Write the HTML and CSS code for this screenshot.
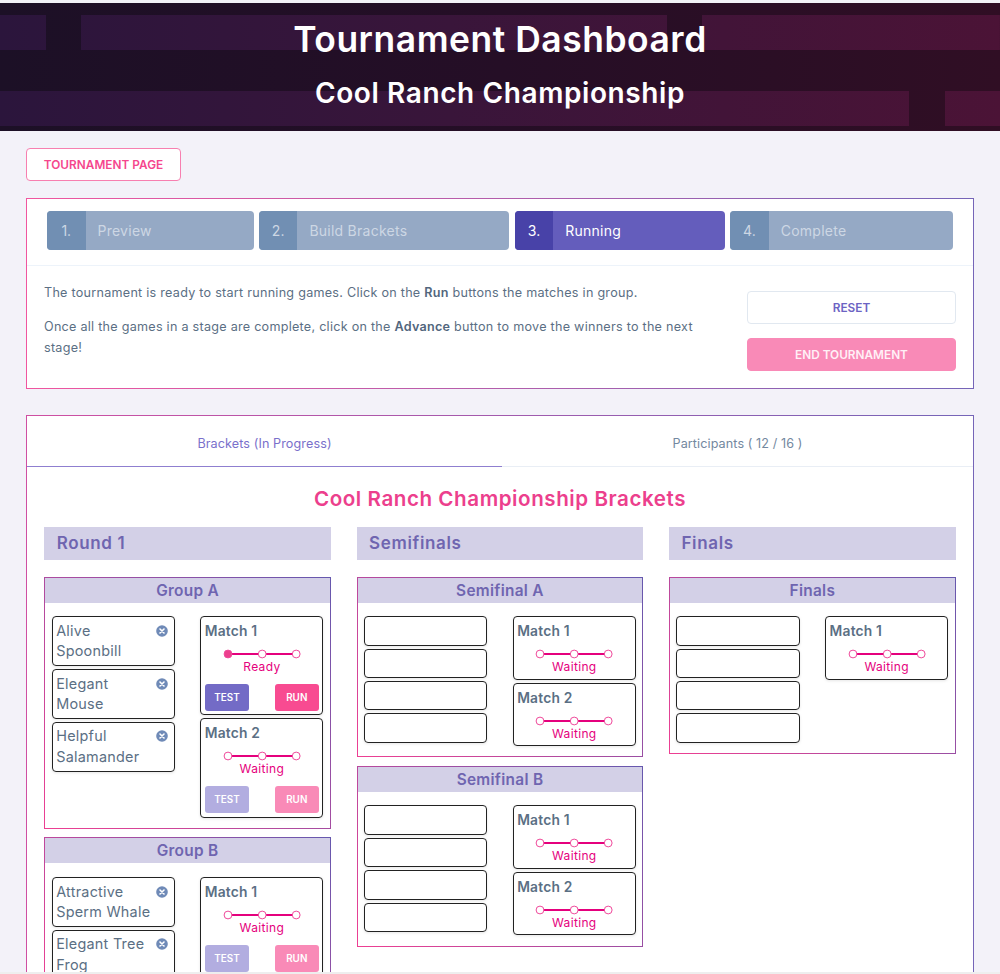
FILE: index.html
```html
<!DOCTYPE html>
<html lang="en">
<head>
<meta charset="utf-8">
<title>Tournament Dashboard</title>
<link rel="stylesheet" href="styles.css">
</head>
<body>
<svg class="defs" width="0" height="0">
  <symbol id="track" viewBox="0 0 78 10">
    <path d="M5 5H73" stroke="#e5007d" stroke-width="1.9"/>
    <circle cx="5" cy="5" r="3.9"/>
    <circle cx="39.2" cy="5" r="3.9" fill="#fff" stroke="#ef4a9b"/>
    <circle cx="73.2" cy="5" r="3.9" fill="#fff" stroke="#ef4a9b"/>
  </symbol>
  <symbol id="remove" viewBox="0 0 12 12">
    <circle cx="6" cy="6" r="5.8" fill="#6f8ab7"/>
    <path d="M4 4l4 4M8 4l-4 4" stroke="#fff" stroke-width="1.6" stroke-linecap="round"/>
  </symbol>
</svg>
<header class="hero">
  <div class="bricks top"><i></i><i></i><i></i></div>
  <div class="bricks bottom"><i></i><i></i></div>
  <div class="hero-text">
    <h1><span>Tournament Dashboard</span></h1>
    <h2><span>Cool Ranch Championship</span></h2>
  </div>
</header>
<main>
  <a class="btn page-link"><span>TOURNAMENT PAGE</span></a>
  <section class="panel status">
    <ol class="steps">
      <li><b>1.</b><span>Preview</span></li>
      <li><b>2.</b><span>Build Brackets</span></li>
      <li class="on"><b>3.</b><span>Running</span></li>
      <li><b>4.</b><span>Complete</span></li>
    </ol>
    <div class="info">
      <div class="copy">
        <p>The tournament is ready to start running games. Click on the <strong>Run</strong> buttons the matches in group.</p>
        <p>Once all the games in a stage are complete, click on the <strong>Advance</strong> button to move the winners to the next<br>stage!</p>
      </div>
      <div class="actions">
        <a class="btn reset"><span>RESET</span></a>
        <a class="btn end"><span>END TOURNAMENT</span></a>
      </div>
    </div>
  </section>
  <section class="panel board">
    <nav class="tabs"><a class="on"><span>Brackets (In Progress)</span></a><a><span>Participants ( 12 / 16 )</span></a></nav>
    <h3><span>Cool Ranch Championship Brackets</span></h3>
    <div class="rounds">
      <div class="round">
        <h4><span>Round 1</span></h4>
        <div class="group">
          <h5><span>Group A</span></h5>
          <div class="cols">
            <div class="list">
              <div class="card person"><span>Alive<br>Spoonbill</span><svg><use href="#remove"/></svg></div>
              <div class="card person"><span>Elegant<br>Mouse</span><svg><use href="#remove"/></svg></div>
              <div class="card person"><span>Helpful<br>Salamander</span><svg><use href="#remove"/></svg></div>
            </div>
            <div class="list">
              <div class="card match ready"><h6>Match 1</h6><svg><use href="#track"/></svg><p>Ready</p><div class="run"><a>TEST</a><a>RUN</a></div></div>
              <div class="card match off"><h6>Match 2</h6><svg><use href="#track"/></svg><p>Waiting</p><div class="run"><a>TEST</a><a>RUN</a></div></div>
            </div>
          </div>
        </div>
        <div class="group">
          <h5><span>Group B</span></h5>
          <div class="cols">
            <div class="list">
              <div class="card person"><span>Attractive<br>Sperm Whale</span><svg><use href="#remove"/></svg></div>
              <div class="card person"><span>Elegant Tree<br>Frog</span><svg><use href="#remove"/></svg></div>
            </div>
            <div class="list">
              <div class="card match off"><h6>Match 1</h6><svg><use href="#track"/></svg><p>Waiting</p><div class="run"><a>TEST</a><a>RUN</a></div></div>
            </div>
          </div>
        </div>
      </div>
      <div class="round">
        <h4><span>Semifinals</span></h4>
        <div class="group">
          <h5><span>Semifinal A</span></h5>
          <div class="cols">
            <div class="list"><div class="card slot"></div><div class="card slot"></div><div class="card slot"></div><div class="card slot"></div></div>
            <div class="list">
              <div class="card match"><h6>Match 1</h6><svg><use href="#track"/></svg><p>Waiting</p></div>
              <div class="card match"><h6>Match 2</h6><svg><use href="#track"/></svg><p>Waiting</p></div>
            </div>
          </div>
        </div>
        <div class="group">
          <h5><span>Semifinal B</span></h5>
          <div class="cols">
            <div class="list"><div class="card slot"></div><div class="card slot"></div><div class="card slot"></div><div class="card slot"></div></div>
            <div class="list">
              <div class="card match"><h6>Match 1</h6><svg><use href="#track"/></svg><p>Waiting</p></div>
              <div class="card match"><h6>Match 2</h6><svg><use href="#track"/></svg><p>Waiting</p></div>
            </div>
          </div>
        </div>
      </div>
      <div class="round">
        <h4><span>Finals</span></h4>
        <div class="group">
          <h5><span>Finals</span></h5>
          <div class="cols">
            <div class="list"><div class="card slot"></div><div class="card slot"></div><div class="card slot"></div><div class="card slot"></div></div>
            <div class="list">
              <div class="card match"><h6>Match 1</h6><svg><use href="#track"/></svg><p>Waiting</p></div>
            </div>
          </div>
        </div>
      </div>
    </div>
  </section>
</main>
</body>
</html>
```

FILE: styles.css
```css
* { box-sizing: border-box; margin: 0; padding: 0; }
body {
  height: 974px;
  overflow: hidden;
  display: flex;
  flex-direction: column;
  background: #f3f2f9;
  border-top: 3px solid #f2f2f7;
  border-bottom: 2px solid #eeeeee;
  font-family: Inter, "Open Sans", sans-serif;
  font-size: 12.6px;
  color: #5b6f84;
}
.defs { position: absolute; }

.hero {
  flex: none;
  position: relative;
  height: 128px;
  background: linear-gradient(90deg, #1c1026, #250e26 50%, #300e24);
}
.bricks { position: absolute; left: 0; right: 0; height: 35px; display: flex; gap: 35.3px; }
.bricks.top { top: 12px; }
.bricks.bottom { top: 88px; }
.bricks i { background: linear-gradient(90deg, #2b153c, #39153a 45%, #4b1336) fixed; }
.top i:nth-child(1) { width: 45.5px; }
.top i:nth-child(2) { width: 586px; }
.bottom i:nth-child(1) { width: 909.3px; }
.bricks i:last-child { flex: 1; }
.hero-text { position: relative; text-align: center; color: #fff; }
h1 { font-size: 35.4px; font-weight: 600; line-height: 50px; padding-top: 12px; letter-spacing: 0.55px; }
h2 { font-size: 28px; font-weight: 600; line-height: 40px; padding-top: 8px; letter-spacing: 0.6px; }

main { flex: 1; min-height: 0; overflow: hidden; padding: 17px 26px 0; display: flex; flex-direction: column; }
.btn {
  display: block;
  height: 33px;
  line-height: 32px;
  border: 1px solid;
  border-radius: 4px;
  text-align: center;
  font-size: 11.8px;
  font-weight: 600;
  background: #fff;
}
.page-link { flex: none; width: 155px; color: #f5468d; border-color: #f77fb0; letter-spacing: 0.03px; }
.panel { width: 948px; background: #fff; border: 1px solid; border-image: linear-gradient(90deg, #f0559f, #7565b8) 1; }
.status { flex: none; height: 191px; margin-top: 17px; }
.steps {
  list-style: none;
  display: grid;
  grid-template-columns: 206.5px 250.5px 210px 223px;
  gap: 5.4px;
  height: 67px;
  padding: 12px 0 0 20px;
  border-bottom: 1px solid #edf3fa;
}
.steps li { display: flex; height: 39px; line-height: 39px; border-radius: 4px; overflow: hidden; background: #95a9c5; color: #cdd7e4; font-size: 14px; }
.steps b { width: 38.5px; font-weight: 400; text-align: center; background: #718fb3; }
.steps span { padding-left: 12px; letter-spacing: 0.25px; }
.steps .on { background: #645dbc; color: #fff; }
.steps .on b { background: #4842a8; }
.info { display: flex; justify-content: space-between; padding: 17.3px 17px 0; }
.copy { line-height: 20.6px; letter-spacing: 0.26px; white-space: nowrap; }
.copy p + p { margin-top: 13.4px; }
strong { font-weight: 600; color: #52667d; }
.actions { width: 209px; padding-top: 7.7px; display: grid; gap: 14.5px; align-content: start; }
.reset { color: #6c63c3; border-color: #e1e8f0; }
.end { color: #fff0f6; background: #f98ab7; border-color: #f98ab7; }

.board { flex: none; height: 700px; margin-top: 26px; border-image: linear-gradient(90deg, #cf4fa2, #7565b8) 1; }
.tabs { display: grid; grid-template-columns: 475px 1fr; height: 51px; text-align: center; }
.tabs a { height: 51px; padding-top: 4px; border-bottom: 1px solid #e9eef5; color: #7388a0; letter-spacing: 0.1px; line-height: 47px; }
.tabs .on { color: #7a70cb; border-color: #8f7fd0; }
h3 { text-align: center; color: #ec3f8d; font-size: 20.6px; font-weight: 600; line-height: 30px; margin: 17px 0 13px; letter-spacing: 0.55px; }
.rounds { display: grid; grid-template-columns: repeat(3, 286.8px); gap: 25.6px; padding-left: 17.2px; }
h4 { height: 32.5px; line-height: 33.5px; padding-left: 12.5px; margin-bottom: 17px; background: #d3d0e7; color: #6f65b0; font-size: 17px; font-weight: 600; letter-spacing: 0.65px; }
.group { border: 1px solid; border-image: linear-gradient(45deg, #ee3f92, #6558ae) 1; padding-bottom: 10.3px; margin-bottom: 8.3px; }
h5 { height: 25px; line-height: 26px; text-align: center; background: #d3d0e7; color: #6f65b0; font-size: 15.4px; font-weight: 600; letter-spacing: 0.3px; }
.cols { display: flex; justify-content: space-between; padding: 13.8px 6.5px 0; }
.list { width: 123.2px; display: grid; gap: 3px; align-content: start; }
.card { border: 1px solid #222; border-radius: 4px; box-shadow: 0 1px 3px rgba(0, 0, 0, .1); }
.slot { height: 29.4px; }
.person { height: 49.8px; padding: 3.6px 4px 3.6px 3.5px; display: flex; justify-content: space-between; line-height: 20.6px; font-size: 14.4px; letter-spacing: 0.25px; white-space: nowrap; }
.person svg { width: 12px; height: 12px; margin: 4px 2px 0 -20px; flex: none; }
.match { height: 63.4px; padding: 4px; text-align: center; }
.match:has(.run) { height: 99.2px; }
h6 { text-align: left; font-size: 13.8px; line-height: 20px; font-weight: 600; letter-spacing: 0.2px; margin-left: -0.5px; }
.match svg { display: block; width: 78px; height: 10px; margin: 8px auto 0; fill: #fff; stroke: #ef4a9b; }
.match.ready svg { fill: #ec3f8d; }
.match p { color: #e5007d; font-size: 12px; line-height: 14px; margin-top: 1px; letter-spacing: 0.35px; }
.run { display: flex; justify-content: space-between; margin: 9.8px -1.5px 0; padding: 0 1px; }
.run a { width: 44.4px; height: 27.2px; line-height: 27.2px; border-radius: 3px; color: #fff; font-size: 9.9px; font-weight: 600; background: #736bc6; }
.run a + a { background: #f84b91; }
.off .run a { background: #b2ade0; }
.off .run a + a { background: #f98ab7; }
```
